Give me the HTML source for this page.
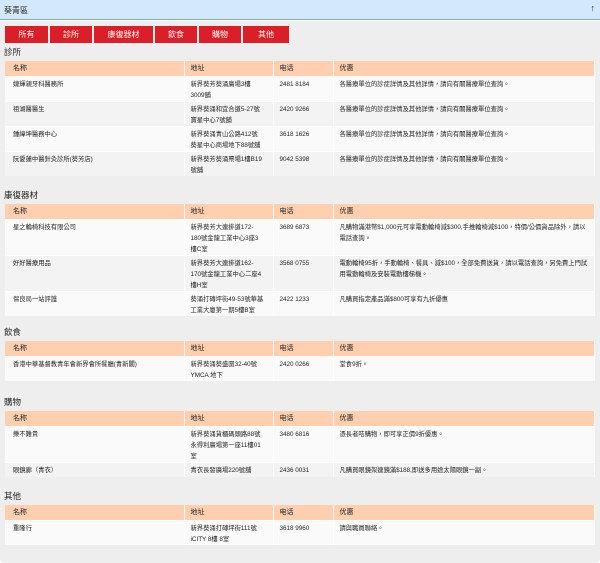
<!DOCTYPE html>
<html><head><meta charset="utf-8"><style>
*{margin:0;padding:0;box-sizing:border-box}
body{width:600px;height:563px;background:#fff;font-family:"Liberation Sans","Noto Sans CJK TC",sans-serif;color:#222;overflow:hidden;position:relative}
.hd{position:absolute;left:0;top:0;width:600px;height:20px;background:#d3e8fa;border-bottom:1px solid #8aa;font-size:8px;padding:5px 0 0 4px}
.hd span{position:absolute;right:5px;top:3px;font-size:9px}
.box{position:absolute;left:0;top:21px;width:600px;height:542px;background:#eeeeee;border-radius:0 0 4px 4px}
.btns{position:absolute;left:5px;top:5px}
.btn{position:absolute;top:0;height:17px;background:#da1f29;color:#fff;font-size:8px;text-align:center;line-height:17px}
.sec{position:absolute;left:4px;font-size:8.5px}
table{position:absolute;left:5px;width:590px;border-collapse:collapse;table-layout:fixed;font-size:6.3px;line-height:11px}
th{background:#ffcfb0;font-weight:normal;text-align:left;height:15px;font-size:7px;padding:0 0 0 6px;border-right:1px solid #fff}
td{vertical-align:top;padding:2px 4px 0 6px;border-right:1px solid #fff;border-top:1px solid #fff}
tr:nth-child(odd) td{background:#f3f3f3}
tr:nth-child(even) td{background:#fafafa}
td:first-child,th:first-child{padding-left:8px}
td:nth-child(2){padding-right:9px}
</style></head><body>
<div class="hd">葵青區<span>↑</span></div>
<div class="box">
<div class="btns">
<div class="btn" style="left:0;width:43px">所有</div>
<div class="btn" style="left:45px;width:42px">診所</div>
<div class="btn" style="left:89px;width:59px">康復器材</div>
<div class="btn" style="left:150px;width:42px">飲食</div>
<div class="btn" style="left:194px;width:42px">購物</div>
<div class="btn" style="left:238px;width:46px">其他</div>
</div>
</div>
<div class="sec" style="top:46px">診所</div>
<table style="top:61px"><colgroup><col style="width:179px"><col style="width:89px"><col style="width:60px"><col></colgroup>
<tr><th>名称</th><th>地址</th><th>电话</th><th>优惠</th></tr>
<tr style="height:23px"><td>婕輝親牙科醫務所</td><td>新界葵芳葵涌廣場3樓3009舖</td><td>2481 8184</td><td>各醫療單位的診症詳情及其他詳情，請向有關醫療單位查詢。</td></tr>
<tr style="height:24px"><td>祖湖醫醫生</td><td>新界葵涌和宜合道5-27號寶星中心7號舖</td><td>2420 9266</td><td>各醫療單位的診症詳情及其他詳情，請向有關醫療單位查詢。</td></tr>
<tr style="height:24px"><td>鍾緯坤醫務中心</td><td>新界葵涌青山公路412號葵星中心商場地下88號舖</td><td>3618 1626</td><td>各醫療單位的診症詳情及其他詳情，請向有關醫療單位查詢。</td></tr>
<tr style="height:23px"><td>阮愛蓮中醫針灸診所(葵芳店)</td><td>新界葵芳葵涌票場1樓B19號舖</td><td>9042 5398</td><td>各醫療單位的診症詳情及其他詳情，請向有關醫療單位查詢。</td></tr>
</table>
<div class="sec" style="top:189px">康復器材</div>
<table style="top:204px"><colgroup><col style="width:179px"><col style="width:89px"><col style="width:60px"><col></colgroup>
<tr><th>名称</th><th>地址</th><th>电话</th><th>优惠</th></tr>
<tr style="height:34px"><td>星之輪椅科技有限公司</td><td>新界葵芳大連排道172-180號金龍工業中心3座3樓C室</td><td>3689 6873</td><td>凡購物滿港幣$1,000元可享電動輪椅減$300,手推輪椅減$100，特價/公價貨品除外，請以電話查詢。</td></tr>
<tr style="height:33px"><td>好好醫療用品</td><td>新界葵芳大連排道162-170號金龍工業中心二座4樓H室</td><td>3568 0755</td><td>電動輪椅95折，手動輪椅、餐具、減$100，全部免費送貨，請以電話查詢，另免費上門試用電動輪椅及安裝電動樓梯機。</td></tr>
<tr style="height:23px"><td>保良局一站評護</td><td>葵涌打磚坪街49-53號華基工業大廈第一期5樓B室</td><td>2422 1233</td><td>凡購買指定產品滿$800可享有九折優惠</td></tr>
</table>
<div class="sec" style="top:326px">飲食</div>
<table style="top:341px"><colgroup><col style="width:179px"><col style="width:89px"><col style="width:60px"><col></colgroup>
<tr><th>名称</th><th>地址</th><th>电话</th><th>优惠</th></tr>
<tr style="height:24px"><td>香港中華基督教青年會新界會所餐廳(青新閣)</td><td>新界葵涌葵盛圍32-40號YMCA 地下</td><td>2420 0266</td><td>堂食9折。</td></tr>
</table>
<div class="sec" style="top:396px">購物</div>
<table style="top:411px"><colgroup><col style="width:179px"><col style="width:89px"><col style="width:60px"><col></colgroup>
<tr><th>名称</th><th>地址</th><th>电话</th><th>优惠</th></tr>
<tr style="height:33px"><td>樂不難貴</td><td>新界葵涌貨櫃碼頭路88號永得利廣場第一座11樓01室</td><td>3480 6816</td><td>憑長者咭購物，即可享正價9折優惠。</td></tr>
<tr style="height:15px"><td>眼鏡廊（青衣）</td><td>青衣長發廣場220號舖</td><td>2436 0031</td><td>凡購買眼鏡架連鏡滿$188,即送多用途太陽眼鏡一副。</td></tr>
</table>
<div class="sec" style="top:490px">其他</div>
<table style="top:505px"><colgroup><col style="width:179px"><col style="width:89px"><col style="width:60px"><col></colgroup>
<tr><th>名称</th><th>地址</th><th>电话</th><th>优惠</th></tr>
<tr style="height:25px"><td>重隆行</td><td>新界葵涌打磚坪街111號iCITY 8樓 8室</td><td>3618 9960</td><td>請與職員聯絡。</td></tr>
</table>
</body></html>
